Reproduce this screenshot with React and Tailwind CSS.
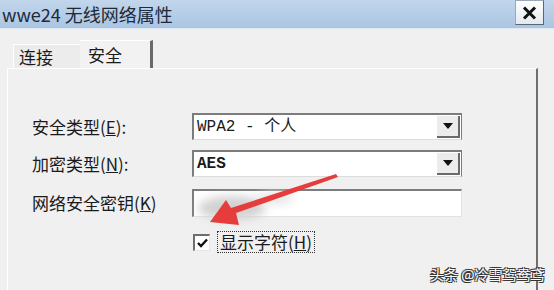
export default function App() {
  const cjk = { fontFamily: '"Noto Sans CJK SC", "Noto Sans", sans-serif' };

  return (
    <div className="relative flex h-[290px] w-[554px] flex-col overflow-hidden bg-[#f0f0f0] text-[#1a1a1a]" style={cjk}>
      {/* title bar */}
      <div className="flex h-[28px] items-start justify-between bg-gradient-to-b from-[#c2d6ec] to-[#aac5e2] pl-[2px] pr-[10px]">
        <span className="mt-[3px] text-[18px] leading-[22px] text-[#1c2a3a]">wwe24 无线网络属性</span>
        <div className="flex h-[25px] w-[29px] items-center justify-center border border-[#9aa8b8] border-b-[#5a6672] border-r-[#5a6672] bg-gradient-to-b from-[#ffffff] to-[#e4e9ef]">
          <svg width="15" height="14" viewBox="0 0 15 14">
            <path d="M2 1.5 L13 12.5 M13 1.5 L2 12.5" stroke="#111" strokeWidth="3" />
          </svg>
        </div>
      </div>
      <div className="h-px bg-[#dfe8f2]" />

      {/* tabs */}
      <div className="flex items-end pl-[13px] pt-[11px]">
        <div className="flex h-[24px] w-[67px] items-center border-l border-t border-[#ffffff] bg-[#ececec] pl-[5px] text-[17px]">连接</div>
        <div className="-mb-px flex h-[29px] w-[73px] items-center border-r-[3px] border-t border-[#ffffff] border-r-[#6a6a6a] bg-[#f2f2f2] pl-[8px] text-[17px]">安全</div>
      </div>

      {/* tab panel */}
      <div className="ml-[7px] mr-[16px] flex-1 border-l border-t border-[#ffffff] border-r-[2px] border-r-[#6f6f6f] bg-[#f0f0f0] pt-[44px]">
        <div className="grid grid-cols-[160px_270px] gap-y-[10px] pl-[24px]">
          <div className="flex h-[27px] items-center text-[17px]">安全类型(<span className="underline">E</span>):</div>
          <Select value="WPA2 - 个人" />
          <div className="flex h-[27px] items-center text-[17px]">加密类型(<span className="underline">N</span>):</div>
          <Select value="AES" bold />
          <div className="mt-[2px] flex h-[28px] items-center text-[17px]">网络安全密钥(<span className="underline">K</span>)</div>
          <div className="mt-[2px] h-[28px] border-l-2 border-t-2 border-[#7c7c7c] border-b border-r border-b-[#e2e2e2] border-r-[#e2e2e2] bg-white" />
        </div>
        <div className="ml-[185px] mt-[14px] flex items-center gap-[7px]">
          <div className="flex h-[17px] w-[17px] items-center justify-center border-l-2 border-t-2 border-[#6e6e6e] border-b border-r border-b-[#e6e6e6] border-r-[#e6e6e6] bg-white">
            <svg width="11" height="10" viewBox="0 0 11 10">
              <path d="M1 5 L4 8 L10 1.5" fill="none" stroke="#111" strokeWidth="2.4" />
            </svg>
          </div>
          <div className="border border-dotted border-[#333] px-[2px] text-[17px] leading-[20px]">显示字符(<span className="underline">H</span>)</div>
        </div>
      </div>

      {/* blur + red arrow */}
      <svg className="pointer-events-none absolute left-0 top-0" width="554" height="290">
        <defs>
          <filter id="b" x="-50%" y="-50%" width="200%" height="200%">
            <feGaussianBlur stdDeviation="5" />
          </filter>
        </defs>
        <ellipse cx="232" cy="208" rx="34" ry="12" fill="#d2d2d2" filter="url(#b)" />
        <ellipse cx="275" cy="198" rx="18" ry="6" fill="#e4e4e4" filter="url(#b)" />
        <path
          d="M336 174 L338 177 L236 213 L239 225 L210 222 L226 200 L231 208 Z"
          fill="#e63c3c"
        />
      </svg>

      {/* watermark */}
      <div
        className="absolute left-[430px] top-[264px] whitespace-nowrap text-[14px] leading-[20px] text-white [text-shadow:1px_1px_0_#333,-1px_-1px_0_#333,1px_-1px_0_#333,-1px_1px_0_#333]"
        style={cjk}
      >
        头条 @冷雪鸳鸯鸢
      </div>
    </div>
  );
}

function Select({ value, bold }) {
  return (
    <div className="flex h-[27px] border-l-2 border-t-2 border-[#7c7c7c] border-b border-r border-b-[#dcdcdc] border-r-[#7c7c7c] bg-white">
      <div
        className={"flex flex-1 items-center pl-[3px] text-[16px] " + (bold ? "font-bold" : "")}
        style={{ fontFamily: '"Liberation Mono", "Noto Sans CJK SC", monospace' }}
      >
        {value}
      </div>
      <div className="my-[1px] mr-[1px] flex w-[23px] items-center justify-center border-b-2 border-r-2 border-[#6a6a6a] bg-[#ececec]">
        <svg width="10" height="6" viewBox="0 0 10 6">
          <path d="M0 0 H10 L5 6 Z" fill="#111" />
        </svg>
      </div>
    </div>
  );
}
